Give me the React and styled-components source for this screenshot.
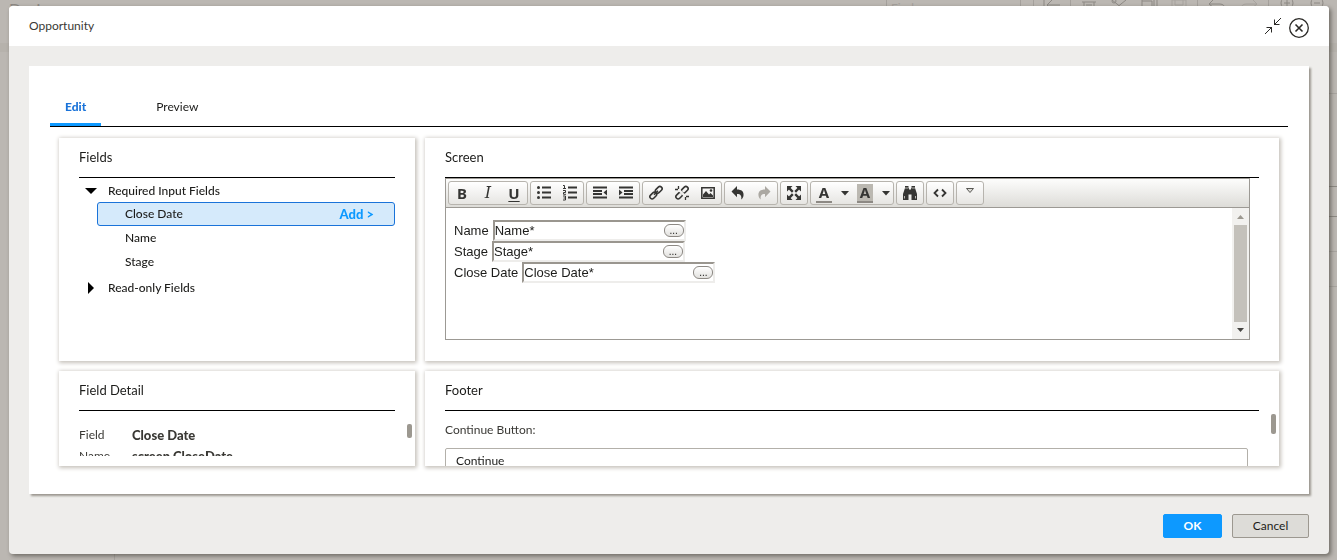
import React, { useState } from 'react'
import styled, { createGlobalStyle } from 'styled-components'

const GlobalStyle = createGlobalStyle`
  * {
    box-sizing : border-box;
  }

  body {
    margin : 0;
    background-color : #bbb7b2;
    font-family : Lato, "Liberation Sans", sans-serif;
    font-size : 12px;
    line-height : 16px;
    color : #1c1c1a;
  }

  button, input {
    font : inherit;
    color : inherit;
  }

  button {
    padding : 0;
    border : 0;
    background : none;
    cursor : pointer;
  }
`

/* dimmed page behind the dialog */

const Backdrop = styled.div`
  height : 100vh;
  display : flex;
  flex-direction : column;
  overflow : hidden;
  color : #8d8984;
`

const BackBar = styled.div`
  flex : 0 0 43px;
  display : flex;
  align-items : flex-start;
  padding : 0 5px 0 9px;
  overflow : hidden;

  svg {
    fill : none;
    stroke : currentColor;
  }
`

const BackTitle = styled.span`
  flex : 1;
  font-size : 16px;
  line-height : 18px;
`

const BackSearch = styled.input`
  width : 135px;
  height : 16px;
  margin-right : 9px;
  padding : 0 4px;
  border : 1px solid #a5a19c;
  border-top : 0;
  background : none;
  font-size : 12px;
  line-height : 8px;

  &::placeholder {
    color : #a5a19c;
    opacity : 1;
  }
`

const BackSeparator = styled.i`
  width : 1px;
  height : 24px;
  margin : 0 3px;
  background-color : #a5a19c;
`

const BackIcon = styled.span`
  display : flex;
  justify-content : center;
  width : ${props => props.$wide ? 32 : 30}px;
  opacity : ${props => props.$faded ? 0.4 : 1};
`

const BackBand = styled.div`
  flex : 0 0 9px;
  background-color : #b6b2ac;
`

const BackBody = styled.div`
  flex : 1;
  display : flex;
  justify-content : space-between;
`

const BackSide = styled.div`
  width : 115px;
  border-right : 1px solid #a9a5a0;
`

const BackRows = styled.div`
  width : 115px;
  padding-top : 41px;
`

const BackRow = styled.div`
  height : ${props => props.$height}px;
  border-top : 1px solid ${props => props.$dark ? '#8d8984' : '#a9a5a0'};
`

/* dialog */

const Overlay = styled.div`
  position : fixed;
  inset : 0;
  display : flex;
  padding : 6px 8px 6px 9px;
`

const Dialog = styled.div`
  flex : 1;
  display : flex;
  flex-direction : column;
  min-width : 0;
  overflow : hidden;
  border-radius : 4px;
  background-color : #eeedeb;
  box-shadow : 2px 2px 4px rgba(60, 56, 50, 0.6);
`

const DialogHeader = styled.header`
  flex : 0 0 40px;
  display : flex;
  align-items : center;
  gap : 8px;
  padding : 0 20px;
  background-color : #fff;

  h1 {
    flex : 1;
    margin : 0;
    font-size : 12px;
    font-weight : 400;
    color : #3a3935;
  }
`

const IconButton = styled.button`
  display : flex;
  margin-top : 4px;
  height : 20px;
`

const Card = styled.main`
  flex : 1;
  display : flex;
  flex-direction : column;
  min-height : 0;
  margin : 20px 20px 0;
  padding : 21px 21px 28px;
  background-color : #fff;
  box-shadow : 2px 2px 2px #9c9890;
`

const Tabs = styled.div`
  flex : 0 0 40px;
  display : flex;
  gap : 40px;
  border-bottom : 1px solid #000;
`

const Tab = styled.button`
  padding : 4px 15px 0;
  border-bottom : 3px solid ${props => props.$active ? '#0d99ff' : 'transparent'};
  font-weight : ${props => props.$active ? 900 : 400};
  color : ${props => props.$active ? '#1a73d9' : '#1c1c1a'};
`

const Panels = styled.div`
  flex : 1;
  display : grid;
  grid-template-columns : 356px minmax(0, 1fr);
  grid-template-rows : minmax(0, 1fr) 95px;
  gap : 10px;
  min-height : 0;
  padding : 11px 9px 0;
`

const Panel = styled.section`
  display : flex;
  flex-direction : column;
  min-width : 0;
  min-height : 0;
  overflow : hidden;
  padding : 0 3px 0 20px;
  background-color : #fff;
  box-shadow : 1px 1px 4px 1px #c6c2bb;
`

const PanelTitle = styled.h2`
  flex : 0 0 40px;
  height : 40px;
  margin : 0 17px 0 0;
  border-bottom : 1px solid #000;
  font-size : 13px;
  font-weight : 400;
  line-height : 39px;
`

const Tree = styled.ul`
  display : flex;
  flex-direction : column;
  gap : 2px;
  margin : 0 17px 0 0;
  padding : 1px 0 0;
  list-style : none;

  ul {
    margin : 0;
    padding : 0 0 0 18px;
    list-style : none;
  }
`

const TreeToggle = styled.button`
  display : flex;
  align-items : center;
  gap : 10px;
  height : 23px;
  padding-left : 5px;
  font-weight : 500;

  svg {
    width : 14px;
    height : 12px;
  }
`

const TreeItem = styled.li`
  display : flex;
  justify-content : space-between;
  height : 24px;
  padding : 0 20px 0 27px;
  border : 1px solid ${props => props.$selected ? '#1a73d9' : 'transparent'};
  border-radius : 3px;
  background-color : ${props => props.$selected ? '#d5eafb' : 'transparent'};
  font-weight : 500;
`

const AddButton = styled.button`
  font-size : 13px;
  font-weight : 900;
  color : #0d99ff;
`

const ScrollArea = styled.div`
  flex : 1;
  display : flex;
  min-height : 0;
  margin-bottom : ${props => props.$inset || 0}px;
  overflow : hidden;
`

const ScrollContent = styled.div`
  flex : 1;
  min-width : 0;
`

const ScrollThumb = styled.div`
  width : 5px;
  height : ${props => props.$height}px;
  margin-top : ${props => props.$top}px;
  border-radius : 2px;
  background-color : #9c9890;
`

const Details = styled.dl`
  display : grid;
  grid-template-columns : 53px 1fr;
  row-gap : 5px;
  margin : 0;
  padding-top : 16px;
  color : #3a3935;

  dd {
    margin : 0;
    font-size : 13px;
    font-weight : 900;
  }
`

const FooterLabel = styled.label`
  display : block;
  margin : 11px 0 10px;
  color : #3a3935;
`

const FooterInput = styled.input`
  display : block;
  width : calc(100% - 23px);
  height : 25px;
  padding : 0 10px;
  border : 1px solid #b3b0aa;
  border-radius : 2px;
`

/* rich text editor */

const Editor = styled.div`
  flex : 1;
  display : flex;
  flex-direction : column;
  margin : 0 26px 21px 0;
  border : 1px solid #9c9994;
`

const Toolbar = styled.div`
  display : flex;
  flex-wrap : wrap;
  gap : 2px;
  padding : 2px;
  border-bottom : 1px solid #9c9994;
  background-image : linear-gradient(#fdfdfc, #dddcd8);
`

const ToolGroup = styled.div`
  display : flex;
  height : 24px;
  border : 1px solid #b7b4ae;
  border-radius : 3px;
  background-image : linear-gradient(#fff, #e6e5e2);
`

const ToolButton = styled.button`
  display : flex;
  align-items : center;
  justify-content : center;
  width : ${props => props.$width}px;
  color : #353533;

  &:disabled {
    color : #aba8a2;
  }
`

const Writing = styled.div`
  flex : 1;
  display : flex;
  min-height : 0;
`

const WritingBody = styled.div`
  flex : 1;
  padding : 12px 8px;
  font-family : "Liberation Sans", Arial, sans-serif;
  font-size : 13px;
`

const FieldLine = styled.div`
  display : flex;
  align-items : center;
  gap : 4px;
  height : 21px;
`

const FieldBox = styled.span`
  display : flex;
  align-items : center;
  justify-content : space-between;
  width : 193px;
  height : 21px;
  border : 2px solid;
  border-color : #9a968f #eeedeb #eeedeb #9a968f;
`

const MoreButton = styled.button`
  width : 20px;
  height : 13px;
  border : 1px solid #8d8984;
  border-radius : 6px;
  background-image : linear-gradient(#fff, #e2e1de);
  font-size : 10px;
  line-height : 8px;
`

const Scrollbar = styled.div`
  width : 17px;
  display : flex;
  flex-direction : column;
  align-items : center;
  gap : 6px;
  padding : 7px 0;
  background-color : #f2f1ef;
`

const ScrollbarThumb = styled.div`
  flex : 1;
  width : 13px;
  background-color : #c4c1bb;
`

const DialogFooter = styled.footer`
  flex : 0 0 60px;
  display : flex;
  align-items : center;
  justify-content : flex-end;
  gap : 10px;
  padding : 4px 20px 0;
`

const FooterButton = styled.button`
  width : ${props => props.$primary ? 59 : 77}px;
  height : 24px;
  border : 1px solid ${props => props.$primary ? '#0d99ff' : '#9c9890'};
  border-radius : 2px;
  background-color : ${props => props.$primary ? '#0d99ff' : '#dddcd8'};
  font-weight : ${props => props.$primary ? 700 : 400};
  color : ${props => props.$primary ? '#fff' : '#1c1c1a'};
`

const listBars = <path d="M6 2.5h9M6 7.5h9M6 12.5h9" stroke="currentColor" strokeWidth="2" />
const textBars = 'M1 2.5h14M1 12.5h14'
const chain = (
  <g fill="none" stroke="currentColor" strokeWidth="1.6">
    <rect x="-3.6" y="-2.2" width="7.6" height="4.4" rx="2.2" transform="translate(10.6 5) rotate(-45)" />
    <rect x="-4" y="-2.2" width="7.6" height="4.4" rx="2.2" transform="translate(5.4 10.4) rotate(-45)" />
  </g>
)

const icons = {
  numbers: (
    <>
      {listBars}
      <path d="M1 .5h1.5v3M1 3.5h3M1 5.5h2.5v2H1.5v1.8H4M1 11h2.5v4H1M1.5 13h2" fill="none" stroke="currentColor" />
    </>
  ),
  bullets: (
    <>
      {listBars}
      <g fill="currentColor">
        <circle cx="2.5" cy="2.5" r="1.5" />
        <circle cx="2.5" cy="7.5" r="1.5" />
        <circle cx="2.5" cy="12.5" r="1.5" />
      </g>
    </>
  ),
  outdent: (
    <>
      <path d={`${textBars}M1 6h9M1 9h9`} stroke="currentColor" strokeWidth="2" />
      <path d="M15 4.5v6L11.5 7.5z" fill="currentColor" />
    </>
  ),
  indent: (
    <>
      <path d={`${textBars}M6 6h9M6 9h9`} stroke="currentColor" strokeWidth="2" />
      <path d="M1 4.5v6L4.5 7.5z" fill="currentColor" />
    </>
  ),
  link: (
    <>
      {chain}
      <path d="M6 9.8l4-4" stroke="currentColor" strokeWidth="1.6" />
    </>
  ),
  unlink: (
    <>
      {chain}
      <path d="M3 3l10 10" stroke="#f2f1ef" strokeWidth="2.4" />
      <path d="M4.5 1v3M1 4.5h3M11.5 12v3M12 11.5h3" stroke="currentColor" strokeWidth="1.3" />
    </>
  ),
  image: (
    <>
      <path d="M1.8 2.8h12.4v10.4H1.8z" fill="none" stroke="currentColor" strokeWidth="1.5" />
      <path d="M3 12V9.5l3-3.5 3 3.5 1.5-1.5L13 10.5V12z" fill="currentColor" />
      <circle cx="11" cy="5.5" r="1.3" fill="currentColor" />
    </>
  ),
  undo: <path d="M7 1v3.5c4.500 0 7 2 6.500 6-.2 1.600-1 3-2.300 4 .6-3.500-.4-5.500-4.200-5.500v3.200L1.500 6.500z" fill="currentColor" />,
  redo: <path d="M9 1v3.500c-4.500 0-7 2-6.500 6 .2 1.600 1 3 2.300 4-.6-3.500.4-5.500 4.200-5.500v3.200l5.500-5.700z" fill="currentColor" />,
  maximize: (
    <>
      <path d="M1 1h5.500L1 6.500zM15 1v5.500L9.500 1zM1 15V9.500L6.500 15zM15 15H9.500L15 9.500z" fill="currentColor" />
      <path d="M2 2l4.800 4.800M14 2L9.200 6.800M2 14l4.800-4.800M14 14L9.200 9.200" stroke="currentColor" strokeWidth="2.4" />
    </>
  ),
  find: (
    <>
      <path d="M3 1h3.500v2H7v1.500h2V3h.5V1H13v2l2 6v6H9.500V9.500h-3V15H1V9l2-6z" fill="currentColor" />
      <path d="M3 3h3.500M9.500 3H13M2.500 11v2.500M13.500 11v2.500" stroke="#d8d7d3" strokeWidth=".8" />
    </>
  ),
  source: <path d="M6 4.500L2.500 8 6 11.500M10 4.500L13.500 8 10 11.500" fill="none" stroke="currentColor" strokeWidth="1.8" />
}

const Letter = styled.span`
  padding : 0 ${props => props.$color ? 3 : 0}px;
  border-bottom : ${props => props.$color ? '2px solid #8d8984' : '0'};
  background-color : ${props => props.$fill ? '#bbb8b1' : 'transparent'};
  font-family : "Noto Sans", "Liberation Sans", sans-serif;
  font-size : 15px;
  font-weight : 700;
  line-height : ${props => props.$color ? 17 : 16}px;
`

const SerifItalic = styled.em`
  font-family : "DejaVu Serif", "Liberation Serif", serif;
  font-size : 16px;
  font-weight : 400;
`

const Underlined = styled(Letter)`
  text-decoration : underline;
  text-underline-offset : 2px;
`

const Icon = ({ name }) => (
  <svg width="16" height="16" viewBox="0 0 16 16">{icons[name]}</svg>
)

const Caret = () => (
  <svg width="8" height="5" viewBox="0 0 8 5"><path d="M0 0h8L4 4.500z" fill="currentColor" /></svg>
)

const groups = [
  [
    { label: 'Bold', content: <Letter>B</Letter> },
    { label: 'Italic', content: <SerifItalic>I</SerifItalic> },
    { label: 'Underline', content: <Underlined>U</Underlined> }
  ],
  [{ label: 'Bulleted list', icon: 'bullets' }, { label: 'Numbered list', icon: 'numbers' }],
  [{ label: 'Decrease indent', icon: 'outdent' }, { label: 'Increase indent', icon: 'indent' }],
  [{ label: 'Link', icon: 'link' }, { label: 'Unlink', icon: 'unlink' }, { label: 'Image', icon: 'image' }],
  [{ label: 'Undo', icon: 'undo' }, { label: 'Redo', icon: 'redo', disabled: true }],
  [{ label: 'Maximize', icon: 'maximize' }],
  [
    { label: 'Text color', content: <Letter $color>A</Letter> },
    { label: 'Text color options', content: <Caret />, width: 15 },
    { label: 'Background color', content: <Letter $color $fill>A</Letter> },
    { label: 'Background color options', content: <Caret />, width: 15 }
  ],
  [{ label: 'Find', icon: 'find' }],
  [{ label: 'Source', icon: 'source' }],
  [{
    label: 'More tools',
    content: (
      <svg width="10" height="14" viewBox="0 0 10 14">
        <path d="M1.500 2.500h7L5 6.500z" fill="#dddcd8" stroke="#5a5955" />
      </svg>
    )
  }]
]

const requiredFields = ['Close Date', 'Name', 'Stage']
const screenFields = ['Name', 'Stage', 'Close Date']

function BackgroundPage() {
  return (
    <Backdrop aria-hidden="true">
      <BackBar>
        <BackTitle>Design</BackTitle>
        <BackSearch placeholder="Find" aria-label="Find" tabIndex={-1} />
        <BackSeparator />
        <BackIcon><svg width="18" height="18"><path d="M1 0v10M17 5H4M9 0L4 5l5 5" /></svg></BackIcon>
        <BackSeparator />
        <BackIcon><svg width="18" height="18"><path d="M2 2h14M4 2v12h10V2M7 4v8M9 4v8M11 4v8" /></svg></BackIcon>
        <BackIcon><svg width="18" height="18"><path d="M2 0l10 8M16 0L6 8" /><circle cx="4" cy="1" r="2" /></svg></BackIcon>
        <BackIcon><svg width="18" height="18"><path d="M2 0v12h12V0M2 1h10v8M17 0v8" /></svg></BackIcon>
        <BackIcon $faded><svg width="18" height="18"><path d="M2 0h14v12H2zM5 0v5h8V0" /></svg></BackIcon>
        <BackSeparator />
        <BackIcon $wide><svg width="18" height="18"><path d="M5 0L1 4l5 4M1 4h11c3 0 5 2 5 5" /></svg></BackIcon>
        <BackIcon $wide $faded><svg width="18" height="18"><path d="M13 0l4 4-5 4M17 4H6c-3 0-5 2-5 5" /></svg></BackIcon>
        <BackSeparator />
        <BackIcon><svg width="18" height="18"><circle cx="9" cy="3" r="6" /><path d="M6 3h6M9 0v6" /></svg></BackIcon>
        <BackIcon><svg width="18" height="18"><circle cx="9" cy="3" r="6" /><path d="M6 3h6" /></svg></BackIcon>
      </BackBar>
      <BackBand />
      <BackBody>
        <BackSide />
        <BackRows>
          <BackRow $height={93} />
          <BackRow $dark $height={30} />
          <BackRow $dark $height={35} />
          <BackRow $height={35} />
          <BackRow $height={35} />
        </BackRows>
      </BackBody>
    </Backdrop>
  )
}

function FieldsPanel({ selected, setSelected }) {
  const [isOpen, setIsOpen] = useState(true)
  return (
    <Panel>
      <PanelTitle>Fields</PanelTitle>
      <Tree>
        <li>
          <TreeToggle aria-expanded={isOpen} onClick={() => { setIsOpen(!isOpen) }}>
            <svg viewBox="0 0 14 12"><path d="M1 3h12L7 9z" /></svg>
            Required Input Fields
          </TreeToggle>
          {
            isOpen &&
              <ul>
                {requiredFields.map(name => (
                  <TreeItem key={name} $selected={name === selected}>
                    <button onClick={() => { setSelected(name) }}>{name}</button>
                    {name === selected && <AddButton>Add &gt;</AddButton>}
                  </TreeItem>
                ))}
              </ul>
          }
        </li>
        <li>
          <TreeToggle aria-expanded={false}>
            <svg viewBox="0 0 14 12"><path d="M4 0v12l6-6z" /></svg>
            Read-only Fields
          </TreeToggle>
        </li>
      </Tree>
    </Panel>
  )
}

function ScreenPanel() {
  return (
    <Panel>
      <PanelTitle>Screen</PanelTitle>
      <Editor>
        <Toolbar>
          {groups.map((tools, index) => (
            <ToolGroup key={index}>
              {tools.map(tool => (
                <ToolButton
                  key={tool.label}
                  aria-label={tool.label}
                  disabled={tool.disabled}
                  $width={tool.width || 26}
                >
                  {tool.icon ? <Icon name={tool.icon} /> : tool.content}
                </ToolButton>
              ))}
            </ToolGroup>
          ))}
        </Toolbar>
        <Writing>
          <WritingBody>
            {screenFields.map(name => (
              <FieldLine key={name}>
                {name}
                <FieldBox>
                  {name}*
                  <MoreButton aria-label={`${name} options`}>...</MoreButton>
                </FieldBox>
              </FieldLine>
            ))}
          </WritingBody>
          <Scrollbar>
            <svg width="7" height="4"><path d="M0 4h7L3.500 0z" fill="#9c9890" /></svg>
            <ScrollbarThumb />
            <svg width="7" height="4"><path d="M0 0h7L3.500 4z" fill="#454441" /></svg>
          </Scrollbar>
        </Writing>
      </Editor>
    </Panel>
  )
}

export default function App() {
  const [tab, setTab] = useState('Edit')
  const [selected, setSelected] = useState('Close Date')
  return (
    <>
      <GlobalStyle />
      <BackgroundPage />
      <Overlay>
        <Dialog role="dialog" aria-label="Opportunity">
          <DialogHeader>
            <h1>Opportunity</h1>
            <IconButton aria-label="Shrink">
              <svg width="16" height="16" fill="none" stroke="#2b2a27">
                <path d="M0 16l7-7M1.500 9.500h5v5M16 0L9 7M9.500 1.500v5h5" />
              </svg>
            </IconButton>
            <IconButton aria-label="Close">
              <svg width="20" height="20" fill="none" stroke="#2b2a27">
                <circle cx="10" cy="10" r="9.300" strokeWidth="1.300" />
                <path d="M6.500 6.500l7 7M13.500 6.500l-7 7" strokeWidth="1.600" />
              </svg>
            </IconButton>
          </DialogHeader>
          <Card>
            <Tabs role="tablist">
              {['Edit', 'Preview'].map(name => (
                <Tab
                  key={name}
                  role="tab"
                  aria-selected={tab === name}
                  $active={tab === name}
                  onClick={() => { setTab(name) }}
                >
                  {name}
                </Tab>
              ))}
            </Tabs>
            <Panels>
              <FieldsPanel selected={selected} setSelected={setSelected} />
              <ScreenPanel />
              <Panel>
                <PanelTitle>Field Detail</PanelTitle>
                <ScrollArea $inset={10}>
                  <ScrollContent>
                    <Details>
                      <dt>Field</dt>
                      <dd>{selected}</dd>
                      <dt>Name</dt>
                      <dd>screen.{selected.replace(' ', '')}</dd>
                    </Details>
                  </ScrollContent>
                  <ScrollThumb $top={13} $height={14} />
                </ScrollArea>
              </Panel>
              <Panel>
                <PanelTitle>Footer</PanelTitle>
                <ScrollArea>
                  <ScrollContent>
                    <FooterLabel htmlFor="continue">Continue Button:</FooterLabel>
                    <FooterInput id="continue" defaultValue="Continue" />
                  </ScrollContent>
                  <ScrollThumb $top={3} $height={20} />
                </ScrollArea>
              </Panel>
            </Panels>
          </Card>
          <DialogFooter>
            <FooterButton $primary>OK</FooterButton>
            <FooterButton>Cancel</FooterButton>
          </DialogFooter>
        </Dialog>
      </Overlay>
    </>
  )
}
